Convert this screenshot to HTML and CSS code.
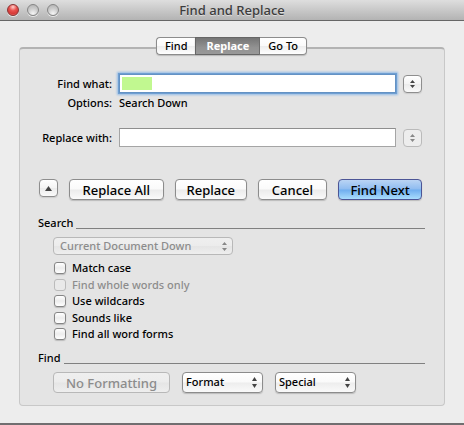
FILE: index.html
```html
<!DOCTYPE html>
<html lang="en">
<head>
<meta charset="utf-8">
<title>Find and Replace</title>
<link rel="stylesheet" href="styles.css">
</head>
<body>
<header class="titlebar">
  <div class="lights">
    <button class="light light-close" aria-label="Close"></button>
    <button class="light" aria-label="Minimize"></button>
    <button class="light" aria-label="Zoom"></button>
  </div>
  <h1 class="title">Find and Replace</h1>
</header>
<main class="content">
  <form class="panel">
    <nav class="tabs">
      <button type="button" class="tab">Find</button>
      <button type="button" class="tab tab-active">Replace</button>
      <button type="button" class="tab">Go To</button>
    </nav>

    <div class="fields">
      <label class="field-label" for="find">Find what:</label>
      <input class="field field-focused" id="find" type="text">
      <button type="button" class="small-button" aria-label="Recent searches">
        <svg width="5" height="8" viewBox="0 0 5 8"><path d="M0 3L2.5 0L5 3ZM0 5H5L2.5 8Z"/></svg>
      </button>
      <span class="field-label">Options:</span>
      <span class="options">Search Down</span>
      <label class="field-label replace-row" for="replace">Replace with:</label>
      <input class="field replace-row" id="replace" type="text">
      <button type="button" class="small-button replace-row" aria-label="Recent replacements" disabled>
        <svg width="5" height="8" viewBox="0 0 5 8"><path d="M0 3L2.5 0L5 3ZM0 5H5L2.5 8Z"/></svg>
      </button>
    </div>

    <div class="actions">
      <button type="button" class="small-button" aria-label="Show less">
        <svg width="7" height="5" viewBox="0 0 7 5"><path d="M0 5L3.5 0L7 5Z"/></svg>
      </button>
      <button type="button" class="button replace-all">Replace All</button>
      <button type="button" class="button replace-one">Replace</button>
      <button type="button" class="button cancel">Cancel</button>
      <button type="button" class="button find-next">Find Next</button>
    </div>

    <section class="section">
      <h2 class="heading">Search</h2>
      <div class="select-box scope">
        <select class="select" aria-label="Search scope" disabled><option>Current Document Down</option></select>
        <svg class="arrows" width="5" height="9" viewBox="0 0 5 9"><path d="M0 3L2.5 0L5 3ZM0 6H5L2.5 9Z"/></svg>
      </div>
      <div class="checks">
        <label class="check"><input type="checkbox">Match case</label>
        <label class="check check-disabled"><input type="checkbox" disabled>Find whole words only</label>
        <label class="check"><input type="checkbox">Use wildcards</label>
        <label class="check"><input type="checkbox">Sounds like</label>
        <label class="check"><input type="checkbox">Find all word forms</label>
      </div>
    </section>

    <section class="section section-find">
      <h2 class="heading">Find</h2>
      <div class="formatting">
        <button type="button" class="button no-formatting" disabled>No Formatting</button>
        <div class="select-box">
          <select class="select" aria-label="Format"><option>Format</option></select>
          <svg class="arrows" width="5" height="11" viewBox="0 0 5 11"><path d="M0 4L2.5 0L5 4ZM0 7H5L2.5 11Z"/></svg>
        </div>
        <div class="select-box">
          <select class="select" aria-label="Special"><option>Special</option></select>
          <svg class="arrows" width="5" height="11" viewBox="0 0 5 11"><path d="M0 4L2.5 0L5 4ZM0 7H5L2.5 11Z"/></svg>
        </div>
      </div>
    </section>
  </form>
</main>
</body>
</html>
```
FILE: styles.css
```css
* {
  box-sizing: border-box;
}

body {
  margin: 0;
  min-height: 100vh;
  display: flex;
  flex-direction: column;
  background: #ededed;
  border-bottom: 2px solid #706e70;
  color: #000;
  font: 500 11px/16px "Noto Sans", "Open Sans", sans-serif;
}

button,
input,
select {
  margin: 0;
  padding: 0;
  font: inherit;
  color: inherit;
}

.titlebar {
  display: grid;
  grid-template-columns: 1fr auto 1fr;
  align-items: center;
  height: 21px;
  padding: 0 7px;
  background: linear-gradient(#dedede, #b3b3b3);
  border-bottom: 1px solid #666;
}

.lights {
  display: flex;
  gap: 8px;
}

.light {
  width: 12px;
  height: 12px;
  border: 1px solid #858585;
  border-radius: 50%;
  background: radial-gradient(circle at 50% 85%, #f5f5f5, #c9c9c9 55%, #b0b0b0);
  box-shadow: 0 1px 0 #e8e8e8;
}

.light-close {
  border-color: #893232;
  background: radial-gradient(circle at 50% 20%, #ffd0cc, #e9514d 40%, #d63a38 70%, #ff8b80);
}

.title {
  margin: 0;
  color: #3c3c3c;
  font-size: 13px;
  font-weight: 500;
  line-height: 20px;
  text-shadow: 0 1px 0 #dcdcdc;
}

.content {
  flex: 1;
  padding: 26px 19px 17px;
}

.panel {
  height: 100%;
  padding: 0 19px 12px 18px;
  background: #e4e4e4;
  border: 1px solid #c8c8c8;
  border-top: 2px solid #b3b3b3;
  border-radius: 4px;
}

.tabs {
  display: flex;
  justify-content: center;
  margin-top: -12px;
}

.tab {
  height: 18px;
  padding: 0 8px;
  border: 1px solid #8c8c8c;
  background: linear-gradient(#fff, #fafafa 50%, #ededed 51%, #fff);
  box-shadow: 0 1px 1px #bbb;
  line-height: 16px;
}

.tab:first-child {
  border-right: 0;
  border-radius: 4px 0 0 4px;
}

.tab:last-child {
  border-left: 0;
  border-radius: 0 4px 4px 0;
}

.tab-active {
  padding: 0 10px;
  border-color: #666;
  background: linear-gradient(#757575, #929292 60%, #999);
  color: #fff;
  font-weight: 700;
}

.fields {
  display: grid;
  grid-template-columns: 74px 1fr 19px;
  column-gap: 7px;
  align-items: center;
  padding: 19px 3px 0 0;
}

.field-label {
  text-align: right;
  white-space: nowrap;
}

.options {
  grid-column: 2 / 4;
  line-height: 20px;
}

.field {
  width: 100%;
  min-width: 0;
  height: 19px;
  padding: 0 3px;
  border: 1px solid #a5a5a5;
  border-top-color: #8e8e8e;
  background: #fff;
  outline: none;
}

.field-focused {
  border-color: #6492c4;
  background: linear-gradient(#c1f890, #c1f890) 2px 2px / 30px 13px no-repeat #fff;
  box-shadow: 0 0 0 1px #6f9fd2, 0 0 2px 2px #94bce6;
}

.replace-row {
  margin-top: 15px;
}

.small-button {
  display: flex;
  align-items: center;
  justify-content: center;
  width: 19px;
  height: 18px;
  border: 1px solid #8e8e8e;
  border-radius: 4px;
  background: linear-gradient(#fff, #f4f4f4 50%, #ececec 51%, #fafafa);
  box-shadow: 0 1px 1px #ccc;
  fill: #444;
}

.small-button:disabled {
  border-color: #bababa;
  background: #ededed;
  box-shadow: none;
  fill: #888;
}

.actions {
  display: flex;
  align-items: flex-start;
  gap: 11px;
  padding: 32px 3px 0 1px;
}

.button {
  height: 21px;
  border: 1px solid #8c8c8c;
  border-radius: 4px;
  background: linear-gradient(#fff, #fafafa 48%, #ebebeb 52%, #fafafa);
  box-shadow: 0 1px 1px #bbb;
  font-size: 13px;
  line-height: 18px;
  white-space: nowrap;
}

.replace-all {
  flex: 95 1 0;
}

.replace-one {
  flex: 72 1 0;
}

.cancel {
  flex: 69 1 0;
}

.find-next {
  flex: 84 1 0;
  border-color: #4c5596;
  background: linear-gradient(#bad4f4, #8fbcf0 48%, #6fadee 52%, #a9ddfd);
}

.section {
  padding-top: 15px;
}

.section-find {
  padding-top: 8px;
}

.heading {
  display: flex;
  align-items: center;
  gap: 3px;
  margin: 0 0 6px;
  font-size: 11px;
  font-weight: 500;
  line-height: 16px;
}

.heading::after {
  content: "";
  flex: 1;
  height: 1px;
  margin-top: 11px;
  background: #808080;
}

.select-box {
  position: relative;
  width: 81px;
}

.select {
  display: block;
  width: 100%;
  height: 21px;
  padding: 0 16px 1px 3px;
  appearance: none;
  border: 1px solid #8c8c8c;
  border-radius: 4px;
  background: linear-gradient(#fff, #fafafa 48%, #ededed 52%, #fafafa);
  box-shadow: 0 1px 1px #bbb;
}

.arrows {
  position: absolute;
  top: 5px;
  right: 6px;
  fill: #444;
  pointer-events: none;
}

.scope {
  width: 180px;
  margin-left: 15px;
}

.scope .select {
  height: 18px;
  padding-left: 6px;
}

.scope .arrows {
  fill: #888;
}

.select:disabled,
.button:disabled {
  border-color: #b8b8b8;
  background: linear-gradient(#efefef, #ececec 48%, #e5e5e5 52%, #eee);
  box-shadow: none;
  color: #8c8c8c;
  opacity: 1;
}

.checks {
  display: flex;
  flex-direction: column;
  align-items: flex-start;
  justify-content: space-between;
  min-height: 82px;
  margin: 5px 0 0 16px;
}

.check {
  display: flex;
  align-items: center;
  gap: 6px;
  height: 16px;
}

.check input {
  width: 12px;
  height: 12px;
  appearance: none;
  border: 1px solid #858585;
  border-radius: 3px;
  background: linear-gradient(#fff, #ececec 50%, #fff);
  box-shadow: 0 1px 1px #bbb;
}

.check-disabled {
  color: #8c8c8c;
}

.check input:disabled {
  border-color: #bbb;
  background: #e9e9e9;
  box-shadow: none;
}

.formatting {
  display: flex;
  gap: 12px;
  margin-left: 15px;
}

.no-formatting {
  width: 117px;
}
```
